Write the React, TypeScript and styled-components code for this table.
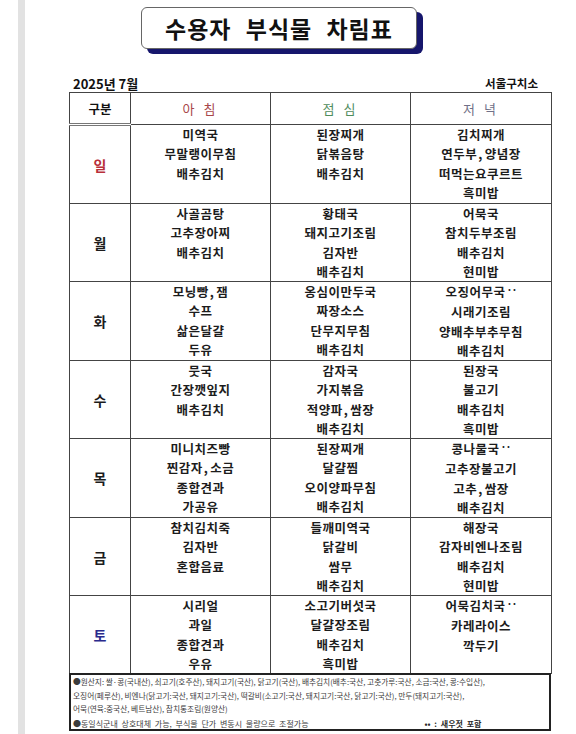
import styled, { createGlobalStyle } from 'styled-components';

const GlobalStyle = createGlobalStyle`
  html, body {
    margin: 0;
    padding: 0;
    background: #fff;
  }
  body {
    font-family: "Noto Sans CJK KR", "Noto Sans", sans-serif;
    color: #222;
  }
`;

const Page = styled.div`
  display: flex;
  width: 576px;
  height: 734px;
  overflow: hidden;
`;

const EdgeStrip = styled.div`
  flex-shrink: 0;
  width: 7px;
  margin-left: 18px;
  background: #e2e2e2;
`;

const Sheet = styled.div`
  display: flex;
  flex-direction: column;
  width: 482px;
  padding-left: 44px;
`;

const TitleBox = styled.div`
  box-sizing: border-box;
  display: flex;
  align-items: center;
  justify-content: center;
  width: 276px;
  height: 42px;
  margin: 7px 0 0 72px;
  border: 1px solid #666;
  border-radius: 6px;
  background: #fff;
  box-shadow: 6px 5px 0 #16166c;
  font-size: 23px;
  font-weight: 700;
  letter-spacing: 1px;
  word-spacing: 8px;
  color: #111;
`;

const DateRow = styled.div`
  display: flex;
  align-items: center;
  justify-content: space-between;
  height: 18px;
  margin-top: 25px;
  padding: 0 13px 0 4px;
  font-weight: 700;
  color: #111;
`;

const MonthLabel = styled.span`
  font-size: 13px;
`;

const Office = styled.span`
  font-size: 11.5px;
`;

const MenuTable = styled.table`
  width: 482px;
  border-collapse: collapse;
  table-layout: fixed;
`;

const HeadCell = styled.th<{ $color: string; $first?: boolean }>`
  height: 30px;
  padding: 0;
  border: 1px solid #444;
  border-bottom: ${(p) => (p.$first ? '3px double #777' : '1px solid #444')};
  font-size: ${(p) => (p.$first ? '12.5px' : '13px')};
  font-weight: ${(p) => (p.$first ? 700 : 400)};
  letter-spacing: ${(p) => (p.$first ? '0' : '3px')};
  color: ${(p) => p.$color};
  text-align: center;
`;

const DayCell = styled.td<{ $color: string }>`
  height: 77px;
  padding: 0;
  border: 1px solid #444;
  text-align: center;
  vertical-align: middle;
  font-size: 14px;
  font-weight: 700;
  color: ${(p) => p.$color};
`;

const MenuCell = styled.td`
  padding: 0;
  border: 1px solid #444;
  text-align: center;
  vertical-align: top;
  font-size: 12.5px;
  font-weight: 700;
  line-height: 19.25px;
  letter-spacing: 0.5px;
  color: #1c1c1c;
`;

const Dish = styled.div`
  white-space: nowrap;
`;

const Comma = styled.span`
  margin: 0 2px 0 1px;
`;

const Marks = styled.span`
  position: relative;
  top: -3px;
  margin-left: 1px;
  font-size: 10px;
  letter-spacing: -1px;
`;

const Notes = styled.div`
  box-sizing: border-box;
  width: 482px;
  height: 58px;
  margin-top: -1px;
  padding: 0 2px;
  border: 2px solid #222;
  font-size: 7.7px;
  line-height: 13.5px;
  color: #3c3c3c;
`;

const NoteLine = styled.div`
  white-space: nowrap;
`;

const LastLine = styled.div`
  display: flex;
  gap: 116px;
  margin-top: 1px;
  font-size: 8px;
  line-height: 13px;
  word-spacing: 2px;
  white-space: nowrap;
`;

const Legend = styled.span`
  font-weight: 700;
  color: #2a2a2a;
`;

type Day = {
  name: string;
  color: string;
  meals: string[][];
};

const days: Day[] = [
  {
    name: '일',
    color: '#b8303a',
    meals: [
      ['미역국', '무말랭이무침', '배추김치'],
      ['된장찌개', '닭볶음탕', '배추김치'],
      ['김치찌개', '연두부,양념장', '떠먹는요쿠르트', '흑미밥'],
    ],
  },
  {
    name: '월',
    color: '#1c1c1c',
    meals: [
      ['사골곰탕', '고추장아찌', '배추김치'],
      ['황태국', '돼지고기조림', '김자반', '배추김치'],
      ['어묵국', '참치두부조림', '배추김치', '현미밥'],
    ],
  },
  {
    name: '화',
    color: '#1c1c1c',
    meals: [
      ['모닝빵,잼', '수프', '삶은달걀', '두유'],
      ['옹심이만두국', '짜장소스', '단무지무침', '배추김치'],
      ['오징어무국*', '시래기조림', '양배추부추무침', '배추김치'],
    ],
  },
  {
    name: '수',
    color: '#1c1c1c',
    meals: [
      ['뭇국', '간장깻잎지', '배추김치'],
      ['감자국', '가지볶음', '적양파,쌈장', '배추김치'],
      ['된장국', '불고기', '배추김치', '흑미밥'],
    ],
  },
  {
    name: '목',
    color: '#1c1c1c',
    meals: [
      ['미니치즈빵', '찐감자,소금', '종합견과', '가공유'],
      ['된장찌개', '달걀찜', '오이양파무침', '배추김치'],
      ['콩나물국*', '고추장불고기', '고추,쌈장', '배추김치'],
    ],
  },
  {
    name: '금',
    color: '#1c1c1c',
    meals: [
      ['참치김치죽', '김자반', '혼합음료'],
      ['들깨미역국', '닭갈비', '쌈무', '배추김치'],
      ['해장국', '감자비엔나조림', '배추김치', '현미밥'],
    ],
  },
  {
    name: '토',
    color: '#2a2a8c',
    meals: [
      ['시리얼', '과일', '종합견과', '우유'],
      ['소고기버섯국', '달걀장조림', '배추김치', '흑미밥'],
      ['어묵김치국*', '카레라이스', '깍두기'],
    ],
  },
];

// a trailing "*" means the dish contains salted shrimp (shown as two dots)
const DishName = ({ text }: { text: string }) => {
  const marked = text.endsWith('*');
  const parts = (marked ? text.slice(0, -1) : text).split(',');
  return (
    <Dish>
      {parts.map((part, i) => (
        <span key={i}>
          {i > 0 && <Comma>,</Comma>}
          {part}
        </span>
      ))}
      {marked && <Marks>··</Marks>}
    </Dish>
  );
};

export default function App() {
  return (
    <>
      <GlobalStyle />
      <Page>
        <EdgeStrip />
        <Sheet>
          <TitleBox>수용자 부식물 차림표</TitleBox>
          <DateRow>
            <MonthLabel>2025년 7월</MonthLabel>
            <Office>서울구치소</Office>
          </DateRow>
          <MenuTable>
            <colgroup>
              <col style={{ width: 61 }} />
              <col style={{ width: 140 }} />
              <col style={{ width: 140 }} />
              <col style={{ width: 141 }} />
            </colgroup>
            <thead>
              <tr>
                <HeadCell $first $color="#111">구분</HeadCell>
                <HeadCell $color="#a8474a">아 침</HeadCell>
                <HeadCell $color="#4f8c5c">점 심</HeadCell>
                <HeadCell $color="#707088">저 녁</HeadCell>
              </tr>
            </thead>
            <tbody>
              {days.map((day) => (
                <tr key={day.name}>
                  <DayCell $color={day.color}>{day.name}</DayCell>
                  {day.meals.map((meal, i) => (
                    <MenuCell key={i}>
                      {meal.map((dish) => (
                        <DishName key={dish} text={dish} />
                      ))}
                    </MenuCell>
                  ))}
                </tr>
              ))}
            </tbody>
          </MenuTable>
          <Notes>
            <NoteLine>
              ●원산지: 쌀·콩(국내산), 쇠고기(호주산), 돼지고기(국산), 닭고기(국산), 배추김치(배추:국산, 고춧가루:국산, 소금:국산, 콩:수입산),
            </NoteLine>
            <NoteLine>
              오징어(페루산), 비엔나(닭고기:국산, 돼지고기:국산), 떡갈비(소고기:국산, 돼지고기:국산, 닭고기:국산), 만두(돼지고기:국산),
            </NoteLine>
            <NoteLine>어묵(연육:중국산, 베트남산), 참치통조림(원양산)</NoteLine>
            <LastLine>
              <span>●동일식군내 상호대체 가능, 부식물 단가 변동시 물량으로 조절가능</span>
              <Legend>•• : 새우젓 포함</Legend>
            </LastLine>
          </Notes>
        </Sheet>
      </Page>
    </>
  );
}
